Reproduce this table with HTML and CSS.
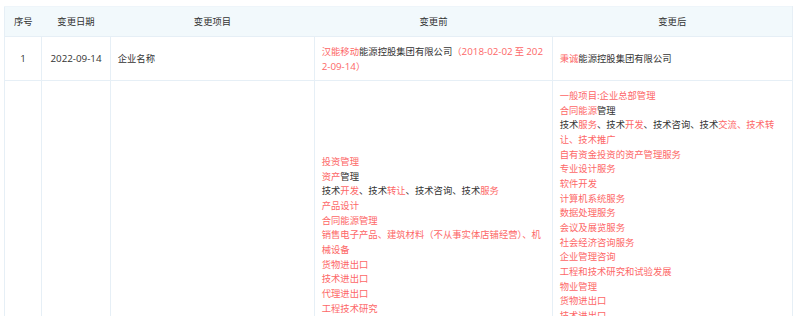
FILE: index.html
```html
<!DOCTYPE html>
<html lang="zh-CN">
<head>
<meta charset="utf-8">
<title>变更记录</title>
<link rel="stylesheet" href="styles.css">
</head>
<body>
<div class="wrap">
<table class="changes">
  <colgroup>
    <col class="c-no">
    <col class="c-date">
    <col class="c-item">
    <col class="c-before">
    <col class="c-after">
  </colgroup>
  <thead>
    <tr>
      <th>序号</th>
      <th>变更日期</th>
      <th>变更项目</th>
      <th>变更前</th>
      <th>变更后</th>
    </tr>
  </thead>
  <tbody>
    <tr>
      <td class="center"><span class="num">1</span></td>
      <td class="center"><span class="num">2022-09-14</span></td>
      <td>企业名称</td>
      <td><span class="hl">汉能移动</span>能源控股集团有限公司<span class="hl">（<span class="num">2018-02-02</span> 至 <span class="num">2022-09-14</span>）</span></td>
      <td><span class="hl">秉诚</span>能源控股集团有限公司</td>
    </tr>
    <tr>
      <td class="center"></td>
      <td class="center"></td>
      <td></td>
      <td>
        <div class="hl">投资管理</div>
        <div><span class="hl">资产</span>管理</div>
        <div>技术<span class="hl">开发</span>、技术<span class="hl">转让</span>、技术咨询、技术<span class="hl">服务</span></div>
        <div class="hl">产品设计</div>
        <div class="hl">合同能源管理</div>
        <div class="hl">销售电子产品、建筑材料（不从事实体店铺经营）、机械设备</div>
        <div class="hl">货物进出口</div>
        <div class="hl">技术进出口</div>
        <div class="hl">代理进出口</div>
        <div class="hl">工程技术研究</div>
        <div class="hl">技术推广服务</div>
      </td>
      <td>
        <div class="hl">一般项目:企业总部管理</div>
        <div><span class="hl">合同能源</span>管理</div>
        <div>技术<span class="hl">服务</span>、技术<span class="hl">开发</span>、技术咨询、技术<span class="hl">交流、技术转让、技术推广</span></div>
        <div class="hl">自有资金投资的资产管理服务</div>
        <div class="hl">专业设计服务</div>
        <div class="hl">软件开发</div>
        <div class="hl">计算机系统服务</div>
        <div class="hl">数据处理服务</div>
        <div class="hl">会议及展览服务</div>
        <div class="hl">社会经济咨询服务</div>
        <div class="hl">企业管理咨询</div>
        <div class="hl">工程和技术研究和试验发展</div>
        <div class="hl">物业管理</div>
        <div class="hl">货物进出口</div>
        <div class="hl">技术进出口</div>
        <div class="hl">代理进出口</div>
        <div class="hl">进出口代理</div>
        <div class="hl">工程管理服务</div>
        <div class="hl">信息系统集成服务</div>
        <div class="hl">储能技术服务</div>
      </td>
    </tr>
  </tbody>
</table>
</div>
</body>
</html>
```

FILE: styles.css
```css
html, body {
  margin: 0;
  padding: 0;
  background: #ffffff;
}

body {
  font-family: "Noto Sans CJK SC", "Noto Sans", sans-serif;
  font-size: 9.333px;
  line-height: 14.667px;
  color: #333333;
}

.wrap {
  padding: 6px 8px 0 4px;
}

.changes {
  width: 788px;
  border-collapse: collapse;
  table-layout: fixed;
}

.c-no { width: 37px; }
.c-date { width: 69px; }
.c-item { width: 204px; }
.c-before { width: 238px; }
.c-after { width: 240px; }

.changes th {
  height: 30px;
  padding: 0 6.667px;
  box-sizing: border-box;
  background: #f2f9fc;
  font-weight: normal;
  color: #333333;
  text-align: center;
  border-top: 1px solid #eef5fa;
  border-bottom: 1px solid #e6eff6;
  border-left: 0;
  border-right: 0;
}

.changes th:first-child { border-left: 1px solid #e6eff6; }
.changes th:last-child { border-right: 1px solid #e6eff6; }

.changes td {
  padding: 6.833px 6.667px;
  border: 1px solid #e6eff6;
  vertical-align: middle;
  word-break: break-all;
  color: #333333;
}

.changes td.center {
  text-align: center;
}

.num {
  font-family: "Open Sans", "Noto Sans CJK SC", sans-serif;
  font-size: 9.8px;
  line-height: 1;
}

.hl {
  color: #fd6767;
}
```
